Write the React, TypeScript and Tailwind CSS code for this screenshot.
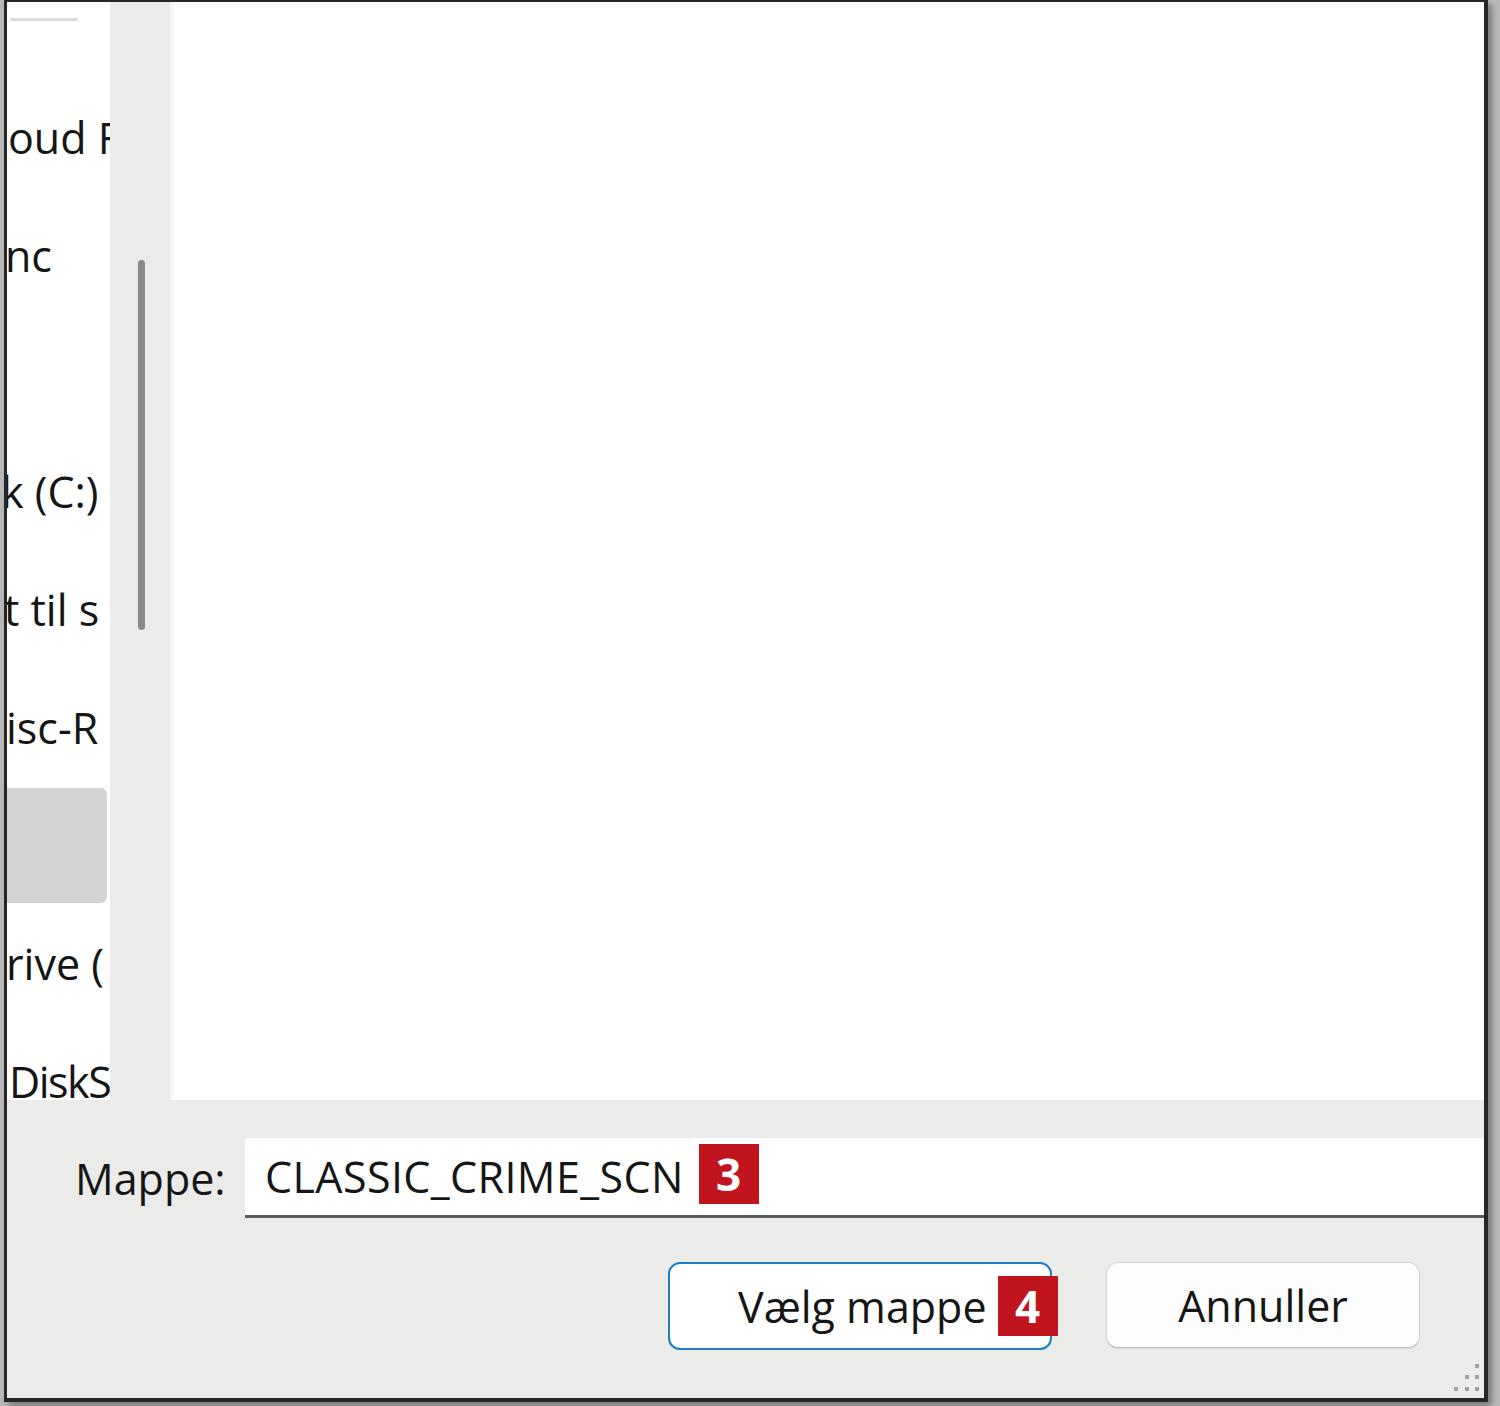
import React from 'react';

const font = { fontFamily: '"Open Sans", "Noto Sans", sans-serif' };

const navItems = [
  { label: 'oud F', shift: 'ml-[1px]' },
  { label: 'nc', shift: 'ml-[-2px]' },
  { label: '', shift: '' },
  { label: 'k (C:)', shift: 'ml-[-6px]' },
  { label: 't til s', shift: 'ml-[-3px]' },
  { label: 'isc-R', shift: 'ml-[-1px]' },
  { label: '', shift: '', selected: true },
  { label: 'rive (', shift: 'ml-[-1px]' },
  { label: 'DiskS', shift: 'ml-[2px] tracking-[-1.5px]' },
];

function Badge({ n }: { n: number }) {
  return (
    <span className="flex h-[60px] w-[60px] shrink-0 items-center justify-center bg-[#c1141d] text-[44px] font-bold leading-none text-white">
      {n}
    </span>
  );
}

function NavPane() {
  return (
    <div className="flex w-[103px] shrink-0 flex-col overflow-hidden bg-white">
      <div className="h-[76px] shrink-0 pt-[16px] pl-[3px]">
        <div className="h-[3px] w-[68px] bg-[#dcdcdc]" />
      </div>
      {navItems.map((item, i) => (
        <div key={i} className="flex h-[118px] shrink-0 items-center">
          {item.selected ? (
            <div className="mr-[3px] h-[115px] w-full rounded-r-[6px] bg-[#d4d4d4]" />
          ) : (
            <span className={`whitespace-nowrap text-[43px] leading-none text-[#161616] ${item.shift}`}>
              {item.label}
            </span>
          )}
        </div>
      ))}
    </div>
  );
}

function ResizeGrip() {
  const dots = [
    [21, 4],
    [11, 15],
    [21, 15],
    [0, 27],
    [11, 27],
    [21, 27],
  ];
  return (
    <svg className="absolute right-[4px] bottom-[6px]" width="26" height="32" viewBox="0 0 26 32">
      {dots.map(([x, y], i) => (
        <rect key={i} x={x} y={y} width="4" height="4" fill="#a3a3a3" />
      ))}
    </svg>
  );
}

export default function App() {
  return (
    <div className="h-[1406px] w-[1500px] overflow-hidden bg-[#b9b9b9]" style={font}>
      <div className="relative ml-[4px] flex h-[1402px] w-[1484px] flex-col border-t-[2px] border-r-[4px] border-b-[4px] border-l-[3px] border-[#262626] bg-[#ebebea] shadow-[4px_4px_6px_rgba(0,0,0,0.35)]">
        <div className="flex h-[1098px] shrink-0">
          <NavPane />
          <div className="w-[60px] shrink-0 bg-[#ebebeb] pt-[258px] pl-[28px]">
            <div className="h-[370px] w-[7px] rounded-full bg-[#8a8a8a]" />
          </div>
          <div className="w-[3px] shrink-0 bg-[#f6f6f6]" />
          <div className="flex-1 bg-white" />
        </div>

        <div className="flex flex-1 flex-col">
          <div className="mt-[38px] flex items-center">
            <span className="ml-[68px] w-[170px] shrink-0 whitespace-nowrap text-[43px] leading-none text-[#161616]">Mappe:</span>
            <div className="flex h-[80px] flex-1 items-center rounded-tl-[4px] border-b-[3px] border-[#5a5a5a] bg-white pl-[20px]">
              <span className="whitespace-nowrap text-[43px] leading-none tracking-[0.4px] text-[#161616]">CLASSIC_CRIME_SCN</span>
              <span className="ml-[15px] mt-[-6px]">
                <Badge n={3} />
              </span>
            </div>
          </div>

          <div className="mt-[44px] flex justify-end gap-[54px] pr-[64px]">
            <button className="flex h-[88px] w-[384px] items-center whitespace-nowrap rounded-[12px] border-[2px] border-[#1b7ec6] bg-white pl-[68px]">
              <span className="whitespace-nowrap text-[43px] leading-none text-[#161616]">Vælg mappe</span>
              <span className="mr-[-8px] ml-[11px]">
                <Badge n={4} />
              </span>
            </button>
            <button className="flex h-[86px] w-[314px] items-center justify-center rounded-[12px] border border-[#d3d3d3] border-b-[#bdbdbd] bg-[#fdfdfd] shadow-[0_1px_1px_rgba(0,0,0,0.08)]">
              <span className="whitespace-nowrap text-[43px] leading-none text-[#161616]">Annuller</span>
            </button>
          </div>
        </div>

        <ResizeGrip />
      </div>
    </div>
  );
}
